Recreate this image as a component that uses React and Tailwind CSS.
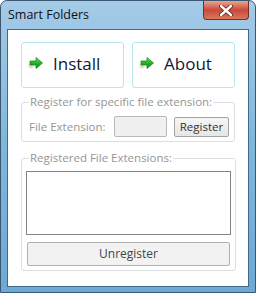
import React from "react";

function Arrow() {
  return (
    <svg width="16" height="14" viewBox="0 0 16 14" className="shrink-0">
      <defs>
        <linearGradient id="ag" x1="0" y1="0" x2="0" y2="1">
          <stop offset="0" stopColor="#7fe07a" />
          <stop offset="0.5" stopColor="#22b324" />
          <stop offset="1" stopColor="#138a17" />
        </linearGradient>
      </defs>
      <ellipse cx="3" cy="10" rx="2.6" ry="2.4" fill="#e7c9d4" opacity="0.8" />
      <path d="M2 5 H8 V1.5 L14.5 7 L8 12.5 V9 H2 Z" fill="url(#ag)" stroke="#168a1a" strokeWidth="0.8" strokeLinejoin="round" />
    </svg>
  );
}

function BigButton({ label }) {
  return (
    <div className="flex h-[46px] w-[103px] items-center gap-[9px] rounded-[3px] border border-[#b8e6ee] bg-white pb-[4px] pl-[6px]">
      <Arrow />
      <span className="text-[17px] leading-none text-[#101836]">{label}</span>
    </div>
  );
}

export default function App() {
  return (
    <div
      className="flex h-[293px] w-[256px] flex-col rounded-t-[7px] border border-[#3b5873] bg-gradient-to-b from-[#a4cbe7] via-[#7fb6dc] to-[#6ea9d5]"
      style={{ fontFamily: '"Open Sans", "Noto Sans", sans-serif' }}
    >
      {/* title bar */}
      <div className="flex h-[28px] shrink-0 items-start justify-between">
        <span className="pl-[7px] pt-[5px] text-[12.5px] leading-[18px] text-[#111]">Smart Folders</span>
        <div className="mr-[6px] flex h-[19px] w-[46px] items-center justify-center rounded-b-[4px] border border-t-0 border-[#7a2d22] bg-gradient-to-b from-[#e9a590] via-[#c9483a] to-[#d9775c]">
          <svg width="14" height="11" viewBox="0 0 14 11">
            <path d="M2 1 L12 10 M12 1 L2 10" stroke="#5a1e16" strokeWidth="4" strokeLinecap="round" />
            <path d="M2 1 L12 10 M12 1 L2 10" stroke="#ffffff" strokeWidth="2.4" strokeLinecap="round" />
          </svg>
        </div>
      </div>

      {/* client area */}
      <div className="mx-[6px] h-[258px] shrink-0 border border-[#3f6a8c] bg-white px-[13px] pt-[12px]">
        <div className="flex gap-[8px]">
          <BigButton label="Install" />
          <BigButton label="About" />
        </div>

        <fieldset className="mt-[6px] w-[214px] rounded-[3px] border border-[#d9dfe3] pb-[4px] pl-[7px] pr-[5px] pt-[6px]">
          <legend className="whitespace-nowrap px-[1px] text-[11.5px] leading-[16px] text-[#959595]">Register for specific file extension:</legend>
          <div className="flex h-[21px] items-center">
            <span className="shrink-0 whitespace-nowrap text-[11.5px] text-[#959595]">File Extension:</span>
            <div className="ml-auto h-[21px] w-[53px] shrink-0 rounded-[2px] border border-[#b8b8b8] bg-[#f0f0f0]" />
            <div className="ml-[7px] flex h-[20px] w-[55px] shrink-0 items-center justify-center rounded-[2px] border border-[#a4a4a4] bg-gradient-to-b from-[#f6f6f6] to-[#e6e6e6] text-[11.5px] text-[#333]">
              Register
            </div>
          </div>
        </fieldset>

        <fieldset className="mt-[8px] w-[214px] rounded-[3px] border border-[#d9dfe3] px-[4px] pb-[4px] pt-[5px]">
          <legend className="ml-[3px] whitespace-nowrap px-[1px] text-[11.5px] leading-[16px] text-[#959595]">Registered File Extensions:</legend>
          <div className="h-[64px] w-[205px] border border-[#848484] bg-white" />
          <div className="mx-[1px] mt-[7px] flex h-[24px] w-[203px] items-center justify-center rounded-[2px] border border-[#b0b0b0] bg-[#f2f2f2] text-[12px] text-[#444]">
            Unregister
          </div>
        </fieldset>
      </div>
    </div>
  );
}
